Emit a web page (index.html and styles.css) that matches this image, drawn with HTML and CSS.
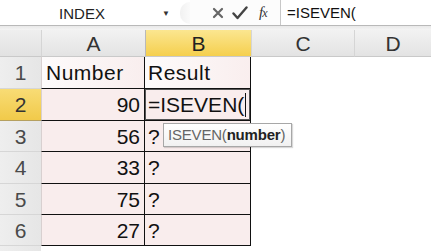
FILE: index.html
```html
<!DOCTYPE html>
<html>
<head>
<meta charset="utf-8">
<link rel="stylesheet" href="styles.css">
</head>
<body>
<div class="app">
  <div class="fbar">
    <div class="namebox"><span class="name">INDEX</span><span class="dd">&#9660;</span></div>
    <div class="grip"></div>
    <div class="icons">
      <svg class="ic-x" width="12" height="12" viewBox="0 0 12 12"><path d="M2 2 L10 10 M10 2 L2 10" stroke="#666" stroke-width="2.2" stroke-linecap="round"/></svg>
      <svg class="ic-ok" width="16" height="14" viewBox="0 0 16 14"><path d="M1.5 7.5 L5.5 12 L14.5 1.5" fill="none" stroke="#444" stroke-width="2.4" stroke-linejoin="round" stroke-linecap="round"/></svg>
      <span class="fx">f<span class="fxx">x</span></span>
    </div>
    <div class="ftext">=ISEVEN(</div>
  </div>
  <div class="strip"></div>
  <div class="grid">
    <div class="corner"></div>
    <div class="ch">A</div>
    <div class="ch sel">B</div>
    <div class="ch">C</div>
    <div class="ch last">D</div>

    <div class="rh">1</div>
    <div class="c t hd a">Number</div>
    <div class="c t hd b">Result</div>
    <div class="c"></div>
    <div class="c"></div>

    <div class="rh sel">2</div>
    <div class="c t a num">90</div>
    <div class="c t b edit">=ISEVEN(<span class="caret"></span></div>
    <div class="c"></div>
    <div class="c"></div>

    <div class="rh">3</div>
    <div class="c t a num">56</div>
    <div class="c t b">?</div>
    <div class="c"></div>
    <div class="c"></div>

    <div class="rh">4</div>
    <div class="c t a num">33</div>
    <div class="c t b">?</div>
    <div class="c"></div>
    <div class="c"></div>

    <div class="rh">5</div>
    <div class="c t a num">75</div>
    <div class="c t b">?</div>
    <div class="c"></div>
    <div class="c"></div>

    <div class="rh">6</div>
    <div class="c t a num">27</div>
    <div class="c t b">?</div>
    <div class="c"></div>
    <div class="c"></div>

    <div class="rh end"></div>
    <div class="c"></div>
    <div class="c"></div>
    <div class="c"></div>
    <div class="c"></div>
  </div>
  <div class="tip">ISEVEN(<b>number</b>)</div>
</div>
</body>
</html>
```
FILE: styles.css
```css
html, body {
  margin: 0;
  padding: 0;
  background: #fff;
  overflow: hidden;
}
.app {
  position: relative;
  width: 431px;
  height: 251px;
  font-family: "Liberation Sans", Arial, sans-serif;
}
.fbar {
  display: flex;
  height: 25px;
  border-bottom: 1px solid #b9b9b9;
  background: #fff;
}
.namebox {
  width: 180px;
  display: flex;
  align-items: center;
  position: relative;
}
.name {
  flex: 1;
  text-align: center;
  font-size: 15px;
  color: #222;
  padding-left: 2px;
  margin-top: 1px;
}
.dd {
  font-size: 8px;
  color: #333;
  margin-right: 10px;
  margin-top: 2px;
}
.grip {
  width: 10px;
  height: 22px;
  margin-top: 2px;
  border-radius: 10px 0 0 10px;
  background: linear-gradient(90deg, #f1f1f1, #fafafa);
}
.icons {
  width: 91px;
  display: flex;
  align-items: center;
  gap: 8px;
  padding-left: 22px;
  box-sizing: border-box;
  border-right: 1px solid #c8c8c8;
  background: #fcfcfc;
}
.fx {
  font-family: "Liberation Serif", serif;
  font-style: italic;
  font-size: 15px;
  color: #333;
  margin-left: 3px;
  letter-spacing: -1px;
}
.fxx { font-size: 12px; }
.ftext {
  flex: 1;
  font-size: 15px;
  color: #111;
  padding-left: 6px;
  line-height: 25px;
}
.strip {
  height: 4px;
  background: linear-gradient(#e9e9e9, #f4f4f4);
}
.grid {
  display: grid;
  grid-template-columns: 41px 104px 106px 103px 77px;
  grid-template-rows: 27px 32px 32px 31px 32px 31px 31px 10px;
}
.corner {
  background: linear-gradient(#efefef, #e2e2e2);
  border-bottom: 1px solid #c9c9c9;
}
.ch {
  background: linear-gradient(#f2f2f2, #e3e3e3);
  border-bottom: 1px solid #c9c9c9;
  border-left: 1px solid #d5d5d5;
  text-align: center;
  font-size: 21px;
  line-height: 28px;
  color: #333;
}
.ch.sel {
  background: linear-gradient(#fbe690, #f5cf4e);
  border-left: 1px solid #b9b9b9;
  color: #222;
}
.rh {
  background: linear-gradient(90deg, #eeeeee, #e6e6e6);
  border-bottom: 1px solid #d6d6d6;
  text-align: center;
  font-size: 21px;
  line-height: 31px;
  color: #4a4a4a;
}
.rh.sel {
  background: linear-gradient(#f8dc75, #f1ca4a);
  color: #333;
  border-bottom: 1px solid #b5a060;
}
.rh.end { border-bottom: none; }
.c {
  background: #fff;
}
.t {
  font-size: 21px;
  line-height: 31px;
  color: #111;
  border-bottom: 1px solid #111;
  white-space: nowrap;
  background: #f9eded;
}
.a {
  border-left: 1px solid #d8d0d0;
  border-right: 1px solid #111;
}
.b {
  border-right: 1px solid #111;
  padding-left: 3px;
}
.hd {
  background: linear-gradient(90deg, #fdfbfb, #f9eeee);
  padding-left: 4px;
  letter-spacing: 0.5px;
}
.hd.b { padding-left: 3px; }
.num {
  text-align: right;
  padding-right: 4px;
}
.edit {
  position: relative;
  box-shadow: inset 0 0 0 1px #555;
}
.caret {
  display: inline-block;
  width: 1px;
  height: 24px;
  background: #111;
  vertical-align: -5px;
  margin-left: 1px;
}
.tip {
  position: absolute;
  left: 163px;
  top: 123px;
  width: 129px;
  height: 24px;
  box-sizing: border-box;
  border: 1px solid #a7a7a7;
  background: linear-gradient(#ffffff, #f1f1f1);
  box-shadow: 1px 1px 1px rgba(0,0,0,0.15);
  font-size: 15px;
  line-height: 22px;
  color: #666;
  padding-left: 4px;
  white-space: nowrap;
  letter-spacing: -0.2px;
}
.tip b { color: #222; }
```
